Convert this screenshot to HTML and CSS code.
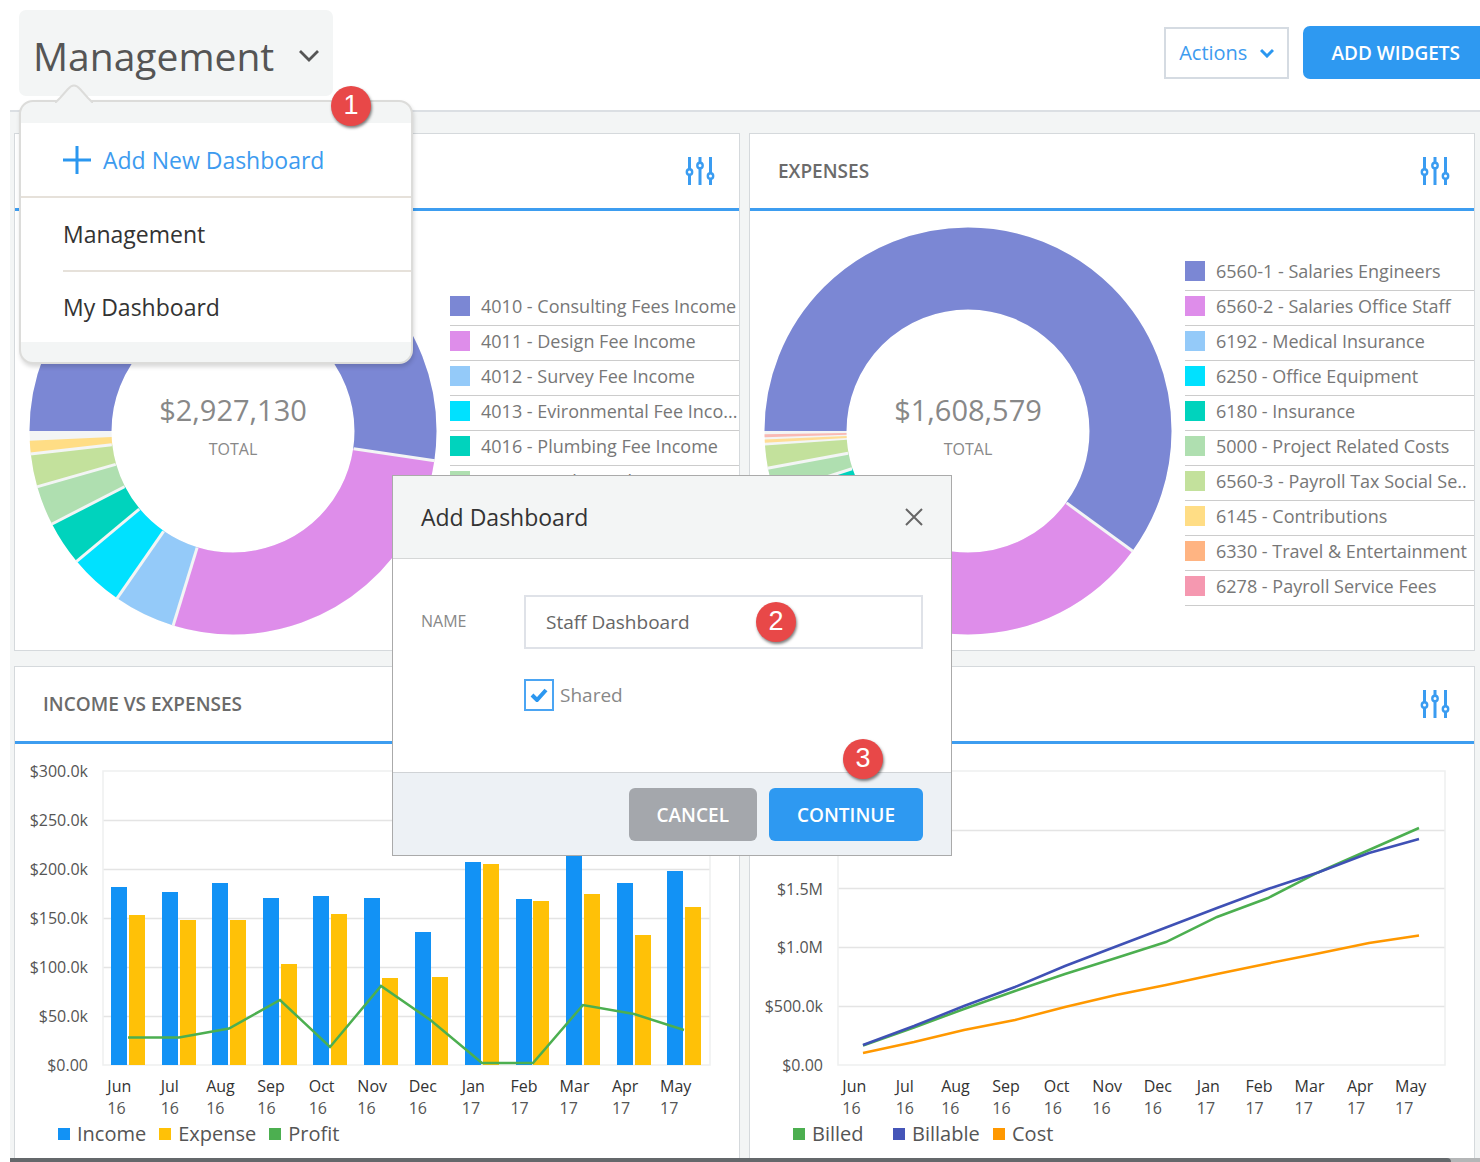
FILE: index.html
```html
<!DOCTYPE html>
<html lang="en">
<head>
<meta charset="utf-8">
<title>Management Dashboard</title>
<link rel="stylesheet" href="styles.css">
</head>
<body>
<svg class="defs" aria-hidden="true">
  <symbol id="sliders" viewBox="0 0 30 28">
    <g fill="none" stroke="currentColor" stroke-width="3">
      <path d="M4.500 0v12M4.500 18v10M15 0v6M15 12v16M25.500 0v16M25.500 22v6"/>
      <circle cx="4.500" cy="15" r="2.700" stroke-width="2.400"/>
      <circle cx="15" cy="8.500" r="2.700" stroke-width="2.400"/>
      <circle cx="25.500" cy="19" r="2.700" stroke-width="2.400"/>
    </g>
  </symbol>
</svg>
<div class="page">
  <header class="topbar">
    <div class="switcher">
      <button class="switcher-button" type="button" aria-expanded="true">
        <span>Management</span>
        <svg width="20" height="14" viewBox="0 0 20 14" aria-hidden="true"><path d="M1 2l9 9 9-9" fill="none" stroke="#555" stroke-width="2.800"/></svg>
      </button>
      <nav class="menu">
        <svg class="menu-caret" width="38" height="19" viewBox="0 0 38 19" aria-hidden="true"><path d="M0 19Q2 17 5 14L13 5Q19-2 25 5L33 14Q36 17 38 19" fill="#f3f5f5" stroke="#dcdcda" stroke-width="2"/></svg>
        <div class="menu-list">
          <a class="menu-add" href="#">
            <svg width="28" height="28" viewBox="0 0 28 28" aria-hidden="true"><path d="M14 0v28M0 14h28" stroke="#2b97f0" stroke-width="3"/></svg>
            Add New Dashboard</a>
          <a class="menu-item" href="#">Management</a>
          <a class="menu-item" href="#">My Dashboard</a>
        </div>
        <span class="badge badge-menu">1</span>
      </nav>
    </div>
    <div class="actions">
      <button class="actions-button" type="button">Actions
        <svg width="14" height="10" viewBox="0 0 14 10" aria-hidden="true"><path d="M1 2l6 6 6-6" fill="none" stroke="#2b97f0" stroke-width="3"/></svg>
      </button>
      <button class="add-widgets" type="button">ADD WIDGETS</button>
    </div>
  </header>

  <main class="board">
    <section class="card">
      <div class="card-head"><h2>INCOME</h2><button class="tune" type="button" aria-label="Income settings"><svg width="30" height="28"><use href="#sliders"/></svg></button></div>
      <div class="donut-body">
        <div class="donut">
          <svg viewBox="0 0 408 408" aria-hidden="true">
            <g class="slices" transform="rotate(180 204 204)">
              <circle cx="204" cy="204" r="162.500" stroke="#f3f5f5"/>
              <circle cx="204" cy="204" r="162.500" pathLength="360" stroke="#7b87d4" stroke-dasharray="188.400 360"/>
              <circle cx="204" cy="204" r="162.500" pathLength="360" stroke="#de8dea" stroke-dasharray="98.700 360" stroke-dashoffset="-188.400"/>
              <circle cx="204" cy="204" r="162.500" pathLength="360" stroke="#94caf9" stroke-dasharray="17.600 360" stroke-dashoffset="-287.100"/>
              <circle cx="204" cy="204" r="162.500" pathLength="360" stroke="#00e1ff" stroke-dasharray="15.500 360" stroke-dashoffset="-304.700"/>
              <circle cx="204" cy="204" r="162.500" pathLength="360" stroke="#00d3bd" stroke-dasharray="12.600 360" stroke-dashoffset="-320.200"/>
              <circle cx="204" cy="204" r="162.500" pathLength="360" stroke="#afdfb0" stroke-dasharray="11.300 360" stroke-dashoffset="-332.800"/>
              <circle cx="204" cy="204" r="162.500" pathLength="360" stroke="#c3e19c" stroke-dasharray="9.400 360" stroke-dashoffset="-344.100"/>
              <circle cx="204" cy="204" r="162.500" pathLength="360" stroke="#ffdd85" stroke-dasharray="3.700 360" stroke-dashoffset="-353.500"/>
            </g>
            <g class="seams">
              <path d="M82 204H0" transform="rotate(188.400 204 204)"/>
              <path d="M82 204H0" transform="rotate(287.100 204 204)"/>
              <path d="M82 204H0" transform="rotate(304.700 204 204)"/>
              <path d="M82 204H0" transform="rotate(320.200 204 204)"/>
              <path d="M82 204H0" transform="rotate(332.800 204 204)"/>
              <path d="M82 204H0" transform="rotate(344.100 204 204)"/>
              <path d="M82 204H0" transform="rotate(353.500 204 204)"/>
            </g>
          </svg>
          <p class="total"><strong>$2,927,130</strong><span>TOTAL</span></p>
        </div>
        <ul class="legend">
          <li><i class="sw c1"></i>4010 - Consulting Fees Income</li>
          <li><i class="sw c2"></i>4011 - Design Fee Income</li>
          <li><i class="sw c3"></i>4012 - Survey Fee Income</li>
          <li><i class="sw c4"></i>4013 - Evironmental Fee Inco...</li>
          <li><i class="sw c5"></i>4016 - Plumbing Fee Income</li>
          <li><i class="sw c6"></i>4017 - Mechanical Fee Income</li>
          <li><i class="sw c7"></i>4018 - Electrical Fee Income</li>
          <li><i class="sw c8"></i>4019 - Other Income</li>
        </ul>
      </div>
    </section>

    <section class="card">
      <div class="card-head"><h2>EXPENSES</h2><button class="tune" type="button" aria-label="Expenses settings"><svg width="30" height="28"><use href="#sliders"/></svg></button></div>
      <div class="donut-body">
        <div class="donut">
          <svg viewBox="0 0 408 408" aria-hidden="true">
            <g class="slices" transform="rotate(180 204 204)">
              <circle cx="204" cy="204" r="162.500" stroke="#f3f5f5"/>
              <circle cx="204" cy="204" r="162.500" pathLength="360" stroke="#7b87d4" stroke-dasharray="216.100 360"/>
              <circle cx="204" cy="204" r="162.500" pathLength="360" stroke="#de8dea" stroke-dasharray="84 360" stroke-dashoffset="-216.100"/>
              <circle cx="204" cy="204" r="162.500" pathLength="360" stroke="#94caf9" stroke-dasharray="18 360" stroke-dashoffset="-300"/>
              <circle cx="204" cy="204" r="162.500" pathLength="360" stroke="#00e1ff" stroke-dasharray="13 360" stroke-dashoffset="-318"/>
              <circle cx="204" cy="204" r="162.500" pathLength="360" stroke="#00d3bd" stroke-dasharray="11 360" stroke-dashoffset="-331"/>
              <circle cx="204" cy="204" r="162.500" pathLength="360" stroke="#afdfb0" stroke-dasharray="7.500 360" stroke-dashoffset="-342"/>
              <circle cx="204" cy="204" r="162.500" pathLength="360" stroke="#c3e19c" stroke-dasharray="6.400 360" stroke-dashoffset="-349.500"/>
              <circle cx="204" cy="204" r="162.500" pathLength="360" stroke="#ffdd95" stroke-dasharray="0.900 360" stroke-dashoffset="-356.700"/>
              <circle cx="204" cy="204" r="162.500" pathLength="360" stroke="#f9b9b4" stroke-dasharray="0.900 360" stroke-dashoffset="-358.200"/>
            </g>
            <g class="seams">
              <path d="M82 204H0" transform="rotate(216.100 204 204)"/>
              <path d="M82 204H0" transform="rotate(300 204 204)"/>
              <path d="M82 204H0" transform="rotate(318 204 204)"/>
              <path d="M82 204H0" transform="rotate(331 204 204)"/>
              <path d="M82 204H0" transform="rotate(342 204 204)"/>
              <path d="M82 204H0" transform="rotate(349.500 204 204)"/>
            </g>
          </svg>
          <p class="total"><strong>$1,608,579</strong><span>TOTAL</span></p>
        </div>
        <ul class="legend">
          <li><i class="sw c1"></i>6560-1 - Salaries Engineers</li>
          <li><i class="sw c2"></i>6560-2 - Salaries Office Staff</li>
          <li><i class="sw c3"></i>6192 - Medical Insurance</li>
          <li><i class="sw c4"></i>6250 - Office Equipment</li>
          <li><i class="sw c5"></i>6180 - Insurance</li>
          <li><i class="sw c6"></i>5000 - Project Related Costs</li>
          <li><i class="sw c7"></i>6560-3 - Payroll Tax Social Se..</li>
          <li><i class="sw c8"></i>6145 - Contributions</li>
          <li><i class="sw c9"></i>6330 - Travel &amp; Entertainment</li>
          <li><i class="sw c10"></i>6278 - Payroll Service Fees</li>
        </ul>
      </div>
    </section>

    <section class="card card-low">
      <div class="card-head"><h2>INCOME VS EXPENSES</h2><button class="tune" type="button" aria-label="Income vs expenses settings"><svg width="30" height="28"><use href="#sliders"/></svg></button></div>
      <div class="chart">
        <ol class="y-axis"><li>$300.0k</li><li>$250.0k</li><li>$200.0k</li><li>$150.0k</li><li>$100.0k</li><li>$50.0k</li><li>$0.00</li></ol>
        <svg class="plot" viewBox="0 0 607 294" preserveAspectRatio="none" aria-hidden="true">
          <path class="grid-line" d="M0 49.500H607M0 98.500H607M0 147.500H607M0 196.500H607M0 245.500H607"/>
          <rect class="frame" x="0" y="0" width="607" height="294"/>
          <g fill="#1292f5">
            <rect x="8" y="116" width="16" height="178"/><rect x="59" y="121" width="16" height="173"/><rect x="109" y="112" width="16" height="182"/><rect x="160" y="127" width="16" height="167"/><rect x="210" y="125" width="16" height="169"/><rect x="261" y="127" width="16" height="167"/><rect x="312" y="161" width="16" height="133"/><rect x="362" y="91" width="16" height="203"/><rect x="413" y="128" width="16" height="166"/><rect x="463" y="69" width="16" height="225"/><rect x="514" y="112" width="16" height="182"/><rect x="564" y="100" width="16" height="194"/>
          </g>
          <g fill="#ffc107">
            <rect x="26" y="144" width="16" height="150"/><rect x="77" y="149" width="16" height="145"/><rect x="127" y="149" width="16" height="145"/><rect x="178" y="193" width="16" height="101"/><rect x="228" y="143" width="16" height="151"/><rect x="279" y="207" width="16" height="87"/><rect x="329" y="206" width="16" height="88"/><rect x="380" y="93" width="16" height="201"/><rect x="430" y="130" width="16" height="164"/><rect x="481" y="123" width="16" height="171"/><rect x="532" y="164" width="16" height="130"/><rect x="582" y="136" width="16" height="158"/>
          </g>
          <polyline class="line" stroke="#4caf50" points="25,266.500 76,266.500 126,257.500 177,229 227,276 278,215 328,249.500 379,292 430,292 480,234 531,243 581,259"/>
        </svg>
        <ol class="x-axis"><li><b>Jun</b>16</li><li><b>Jul</b>16</li><li><b>Aug</b>16</li><li><b>Sep</b>16</li><li><b>Oct</b>16</li><li><b>Nov</b>16</li><li><b>Dec</b>16</li><li><b>Jan</b>17</li><li><b>Feb</b>17</li><li><b>Mar</b>17</li><li><b>Apr</b>17</li><li><b>May</b>17</li></ol>
      </div>
      <ul class="series"><li><i class="key k-income"></i>Income</li><li><i class="key k-expense"></i>Expense</li><li><i class="key k-green"></i>Profit</li></ul>
    </section>

    <section class="card card-low">
      <div class="card-head"><h2>BILLED VS COST</h2><button class="tune" type="button" aria-label="Billed vs cost settings"><svg width="30" height="28"><use href="#sliders"/></svg></button></div>
      <div class="chart">
        <ol class="y-axis"><li>$2.5M</li><li>$2.0M</li><li>$1.5M</li><li>$1.0M</li><li>$500.0k</li><li>$0.00</li></ol>
        <svg class="plot" viewBox="0 0 607 294" preserveAspectRatio="none" aria-hidden="true">
          <path class="grid-line" d="M0 59.500H607M0 117.500H607M0 176.500H607M0 235.500H607"/>
          <rect class="frame" x="0" y="0" width="607" height="294"/>
          <polyline class="line" stroke="#ff9800" points="25,282 76,271 126,259 177,249 227,236 278,224 328,214 379,203 430,192.500 480,182.500 531,172 581,164.500"/>
          <polyline class="line" stroke="#4caf50" points="25,274.500 76,256.500 126,238 177,220 227,203 278,187 328,171 379,146 430,127 480,101.500 531,79 581,57"/>
          <polyline class="line" stroke="#3f51b5" points="25,274 76,255 126,235 177,216 227,195 278,175.500 328,156.500 379,137 430,118 480,101.500 531,82 581,68"/>
        </svg>
        <ol class="x-axis"><li><b>Jun</b>16</li><li><b>Jul</b>16</li><li><b>Aug</b>16</li><li><b>Sep</b>16</li><li><b>Oct</b>16</li><li><b>Nov</b>16</li><li><b>Dec</b>16</li><li><b>Jan</b>17</li><li><b>Feb</b>17</li><li><b>Mar</b>17</li><li><b>Apr</b>17</li><li><b>May</b>17</li></ol>
      </div>
      <ul class="series"><li><i class="key k-green"></i>Billed</li><li><i class="key k-billable"></i>Billable</li><li><i class="key k-cost"></i>Cost</li></ul>
    </section>
  </main>
  <div class="scroll-track"><div class="scroll-thumb"></div></div>

  <form class="modal" role="dialog" aria-labelledby="modal-title">
    <div class="modal-head">
      <h2 id="modal-title">Add Dashboard</h2>
      <button class="close" type="button" aria-label="Close"><svg width="18" height="18" viewBox="0 0 18 18"><path d="M1 1l16 16M17 1L1 17" stroke="#666" stroke-width="2"/></svg></button>
    </div>
    <div class="modal-body">
      <label class="name-label" for="name">NAME</label>
      <div class="name-field">
        <input class="name-input" id="name" type="text" value="Staff Dashboard">
        <span class="badge badge-name">2</span>
      </div>
      <label class="shared"><input type="checkbox" checked>Shared</label>
    </div>
    <div class="modal-foot">
      <button class="btn btn-cancel" type="button">CANCEL</button>
      <button class="btn btn-continue" type="submit">CONTINUE</button>
      <span class="badge badge-continue">3</span>
    </div>
  </form>
</div>
</body>
</html>
```
FILE: styles.css
```css
* { box-sizing: border-box; }

body {
  margin: 0;
  background: #fff;
  color: #555;
  font-family: "Open Sans", "Noto Sans", sans-serif;
  font-size: 18px;
}

h2, p, ol, ul { margin: 0; padding: 0; font-weight: 400; }
ol, ul { list-style: none; }
a { color: inherit; text-decoration: none; }
svg { display: block; flex: none; }
button, input { font: inherit; margin: 0; }
button { border: 0; padding: 0; background: none; cursor: pointer; }

.defs { position: absolute; width: 0; height: 0; }

.page {
  position: relative;
  display: flex;
  flex-direction: column;
  min-height: 100vh;
  margin-left: 10px;
}

/* Top bar */
.topbar {
  display: flex;
  justify-content: space-between;
  align-items: flex-start;
  padding: 10px 0 14px 9px;
  border-bottom: 2px solid #dbdfe3;
}

.switcher { position: relative; z-index: 2; }

.switcher-button {
  display: flex;
  align-items: center;
  gap: 25px;
  height: 86px;
  padding: 6px 14px 0 14px;
  border-radius: 7px;
  background: #f3f5f5;
  color: #555;
  font-size: 39px;
  line-height: 56px;
}

.menu {
  position: absolute;
  top: 90px;
  left: 0;
  width: 394px;
  padding: 21px 0 20px;
  border: 2px solid #dcdcda;
  border-radius: 14px;
  background: #f3f5f5;
  box-shadow: 1px 3px 4px rgba(0, 0, 0, 0.15);
}

.menu-caret { position: absolute; top: -18px; left: 34px; }

.menu-list { background: #fff; color: #333; font-size: 23px; }

.menu-add {
  display: flex;
  align-items: center;
  gap: 12px;
  height: 75px;
  padding-left: 42px;
  border-bottom: 2px solid #e6e1da;
  color: #3d9bef;
}

.menu-item {
  display: flex;
  align-items: center;
  height: 72px;
  margin-left: 42px;
}

.menu-item + .menu-item { border-top: 2px solid #e6e1da; }

.actions { display: flex; align-items: center; gap: 14px; padding-top: 16px; }

.actions-button {
  display: flex;
  align-items: center;
  gap: 13px;
  height: 52px;
  padding: 0 13px;
  border: 2px solid #d5dbe2;
  color: #3d9bef;
  font-size: 20px;
}

.add-widgets {
  height: 53px;
  padding: 0 20px 0 28px;
  border-radius: 7px 0 0 7px;
  background: #2e99f1;
  color: #fff;
  font-size: 19px;
  font-weight: 600;
}

/* Numbered step markers */
.badge {
  position: absolute;
  width: 40px;
  height: 40px;
  border-radius: 50%;
  background: #e84848;
  box-shadow: 1px 2px 3px rgba(0, 0, 0, 0.5);
  color: #fff;
  font-family: "Liberation Sans", Arial, sans-serif;
  font-size: 27px;
  line-height: 38px;
  text-align: center;
}

.badge-menu { top: -16px; right: 40px; }
.badge-name { top: 7px; left: 232px; }
.badge-continue { top: -34px; right: 68px; }

/* Widgets */
.board {
  display: grid;
  grid-template-columns: repeat(2, minmax(0, 1fr));
  grid-template-rows: auto 1fr;
  gap: 15px 9px;
  flex: 1;
  padding: 21px 5px 0 4px;
  background: #f3f5f5;
}

.card { border: 1px solid #d5d9dc; background: #fff; }
.card-low { border-bottom: 0; }

.card-head {
  display: flex;
  justify-content: space-between;
  align-items: center;
  height: 77px;
  padding: 0 24px 0 28px;
  border-bottom: 3px solid #3d9df0;
}

.card-head h2 { color: #6b6b6b; font-size: 19px; font-weight: 600; }
.tune { color: #3a9cf1; }

.donut-body {
  display: flex;
  align-items: center;
  gap: 13px;
  padding: 16px 0 15px 14px;
}

.donut { position: relative; flex: none; width: 408px; }
.slices circle { fill: none; stroke-width: 82; }
.seams path { stroke: #f3f5f5; stroke-width: 3; }

.total {
  position: absolute;
  inset: 0;
  display: flex;
  flex-direction: column;
  align-items: center;
  justify-content: center;
  padding-bottom: 6px;
  color: #888;
}

.total strong { font-size: 29px; font-weight: 400; line-height: 42px; }
.total span { font-size: 16px; line-height: 36px; }

.legend { flex: 1; min-width: 0; color: #777; }

.legend li {
  display: flex;
  align-items: center;
  gap: 11px;
  height: 35px;
  padding-bottom: 5px;
  border-bottom: 1px solid #ccc;
  white-space: nowrap;
}

.sw { width: 20px; height: 20px; }
.c1 { background: #7b87d4; }
.c2 { background: #de8dea; }
.c3 { background: #94caf9; }
.c4 { background: #00e1ff; }
.c5 { background: #00d3bd; }
.c6 { background: #afdfb0; }
.c7 { background: #c3e19c; }
.c8 { background: #ffdd85; }
.c9 { background: #ffb482; }
.c10 { background: #f598b0; }

.chart {
  display: grid;
  grid-template-columns: 73px 1fr;
  column-gap: 15px;
  padding: 17px 29px 0 0;
  color: #555;
  font-size: 16px;
}

.y-axis {
  display: flex;
  flex-direction: column;
  justify-content: space-between;
  line-height: 20px;
  text-align: right;
}

.plot { width: 100%; height: 294px; margin: 10px 0; overflow: visible; }
.grid-line { stroke: #e4e4e4; stroke-width: 1.500; }
.frame { fill: none; stroke: #eeefef; stroke-width: 1.500; }
.line { fill: none; stroke-width: 2.500; }

.x-axis {
  grid-column: 2;
  display: grid;
  grid-template-columns: repeat(12, 1fr);
  justify-items: center;
  margin: 0 9px 0 -9px;
  line-height: 22px;
}

.x-axis b { display: block; color: #333; font-weight: 400; }

.series {
  display: flex;
  gap: 13px;
  padding: 0 43px 9px;
  font-size: 20px;
  line-height: 30px;
}

.series li { display: flex; align-items: center; gap: 7px; min-width: 87px; }
.key { width: 12px; height: 12px; }
.k-income { background: #1292f5; }
.k-expense { background: #ffc107; }
.k-green { background: #4caf50; }
.k-billable { background: #4555b8; }
.k-cost { background: #ff9800; }

.scroll-track { height: 4px; background: #b4b6b7; }
.scroll-thumb { width: 98%; height: 4px; border-radius: 0 4px 0 0; background: #64686b; }

/* Dialog */
.modal {
  position: absolute;
  top: 475px;
  left: 382px;
  z-index: 3;
  width: 560px;
  border: 1px solid #aaa;
  background: #fff;
}

.modal-head {
  display: flex;
  justify-content: space-between;
  align-items: center;
  height: 83px;
  padding: 0 28px;
  border-bottom: 1px solid #d5d7d7;
  background: #f3f5f5;
}

.modal-head h2 { color: #333; font-size: 23px; }

.modal-body {
  display: grid;
  grid-template-columns: 103px 1fr;
  row-gap: 30px;
  align-items: center;
  padding: 36px 28px 61px;
}

.name-label { padding-bottom: 3px; color: #888; font-size: 16px; }
.name-field { position: relative; }

.name-input {
  display: block;
  width: 100%;
  height: 54px;
  padding: 0 20px;
  border: 2px solid #dfe2e8;
  background: #fff;
  color: #666;
  font-size: 19px;
}

.shared {
  grid-column: 2;
  display: flex;
  align-items: center;
  gap: 6px;
  color: #888;
  font-size: 19px;
}

.shared input {
  appearance: none;
  width: 30px;
  height: 32px;
  border: 2px solid #4ba5f3;
  background: url("data:image/svg+xml,%3Csvg xmlns='http://www.w3.org/2000/svg' viewBox='0 0 18 14'%3E%3Cpath d='M2 7l5 5 9-10' fill='none' stroke='%232b97f0' stroke-width='4'/%3E%3C/svg%3E") center / 18px 14px no-repeat;
}

.modal-foot {
  position: relative;
  display: flex;
  justify-content: flex-end;
  gap: 12px;
  padding: 15px 28px 14px;
  border-top: 1px solid #d0d3d6;
  background: #edf1f5;
}

.btn {
  height: 53px;
  padding: 0 28px;
  border-radius: 6px;
  color: #fff;
  font-size: 19px;
  font-weight: 600;
}

.btn-cancel { background: #a4a7ac; }
.btn-continue { background: #2e99f1; }
```
